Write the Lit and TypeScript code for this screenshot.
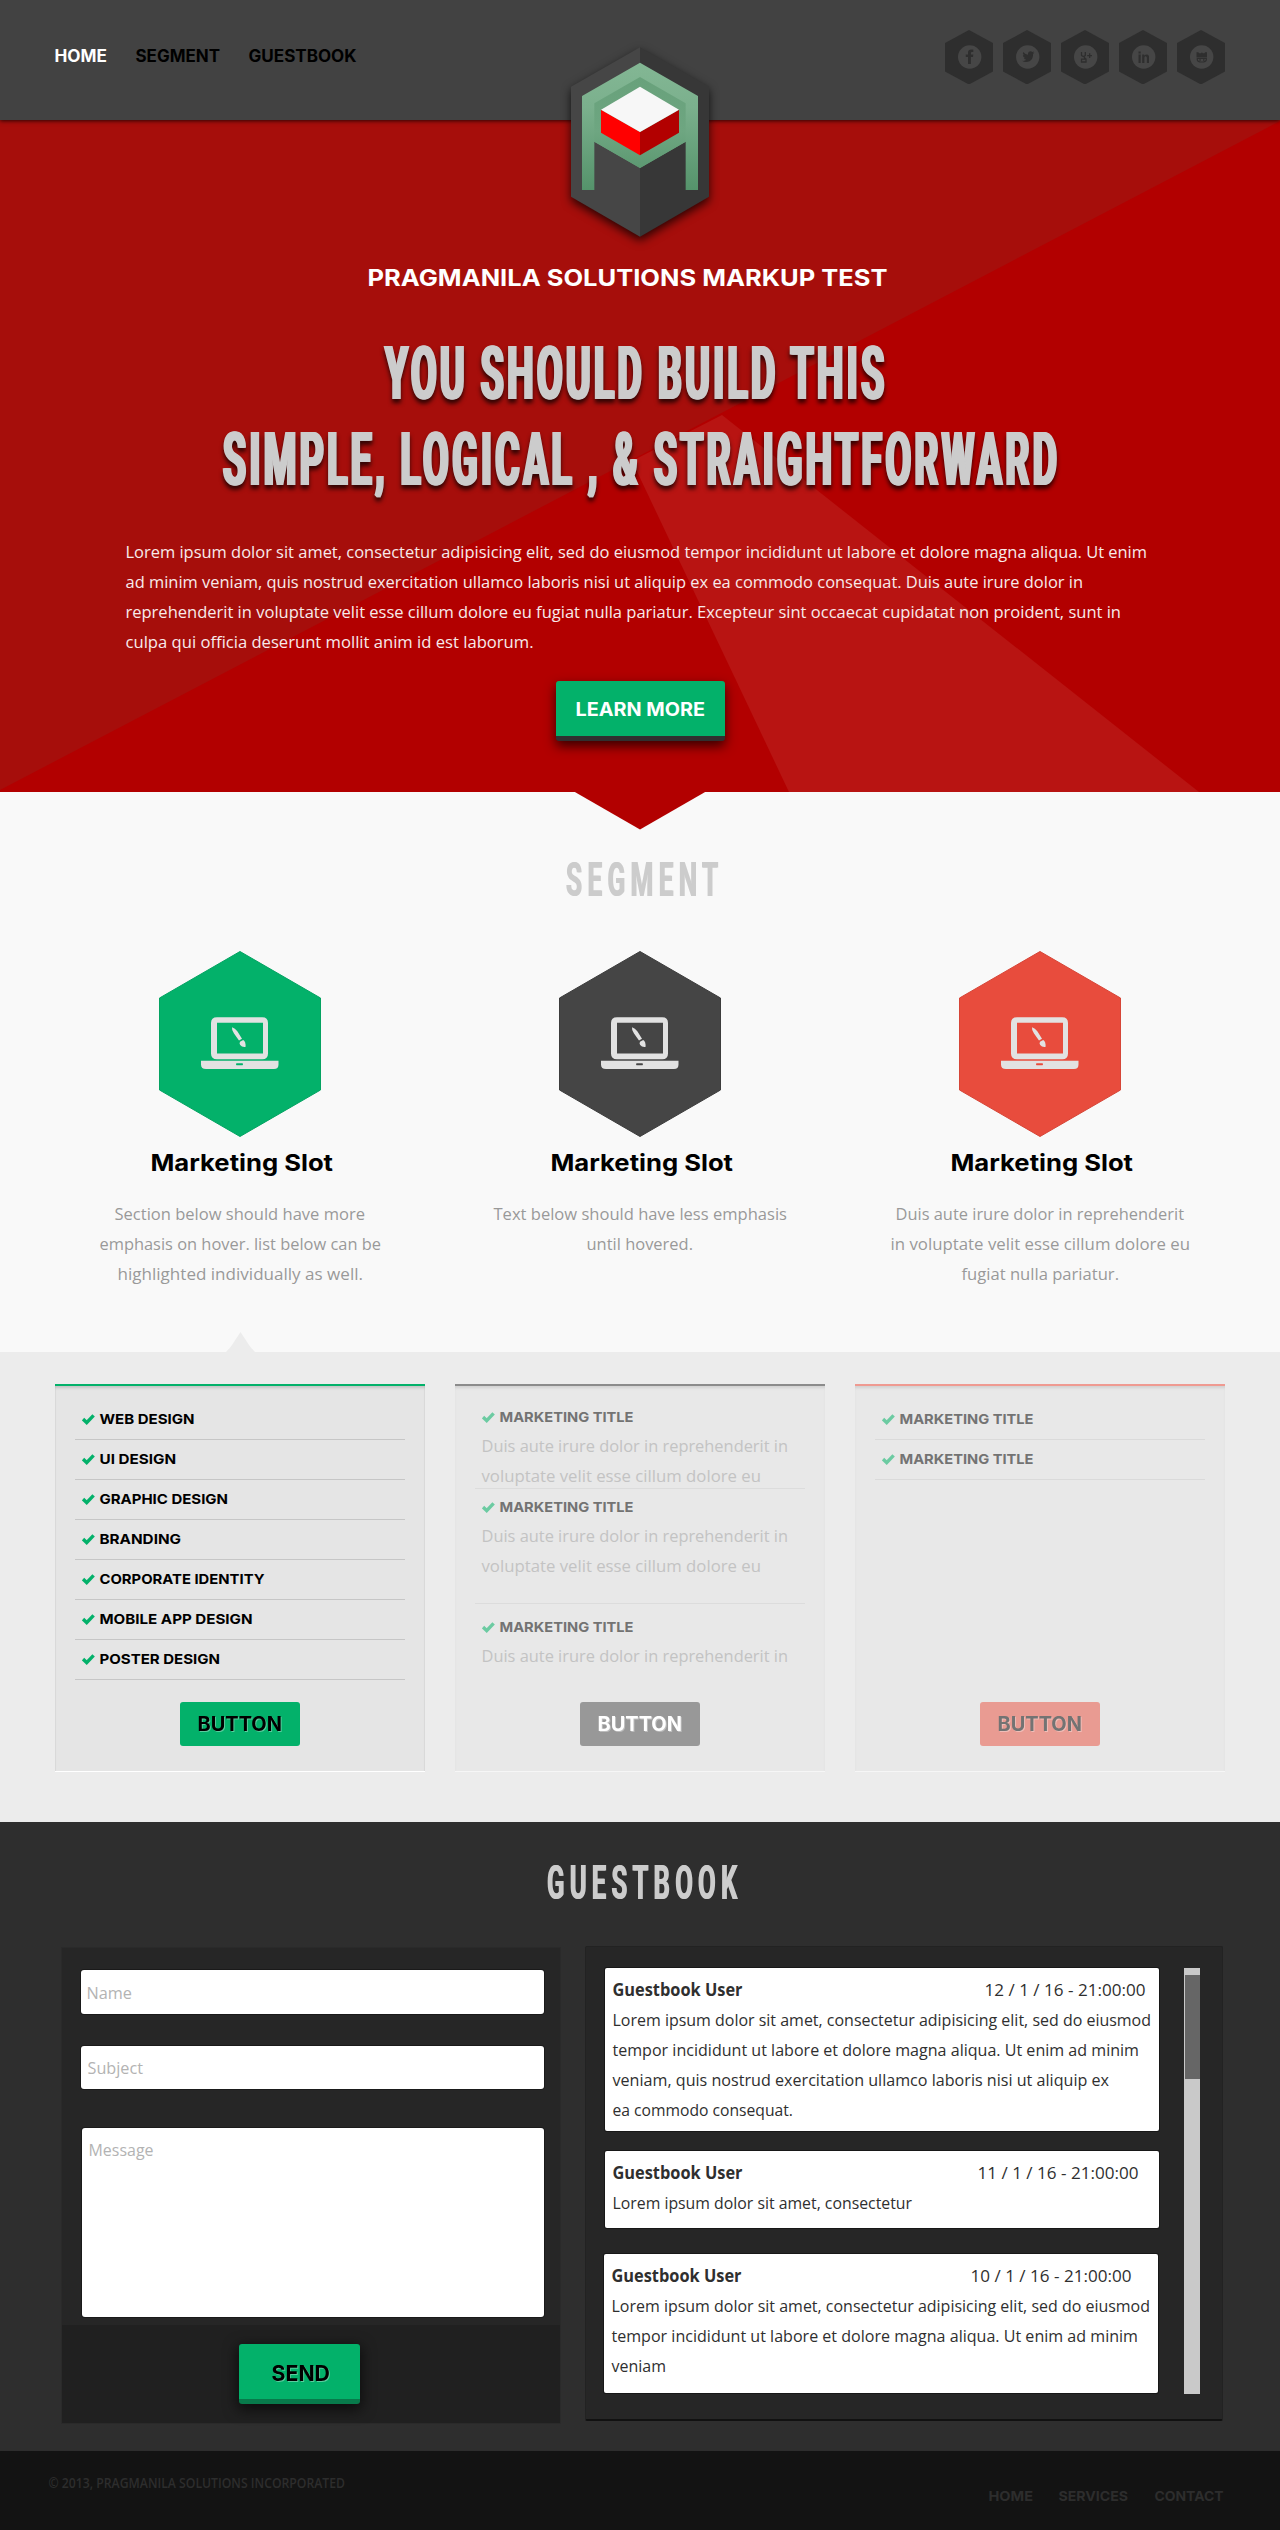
import { LitElement, html, css, svg, nothing } from "lit";
import { customElement } from "lit/decorators.js";

/** One line of text set to an exact measure; `base` is the baseline inside the line box. */
const line = (text: string, width: number, height: number, base: number, cls: string, indent = 0) => html`
  <svg class="line ${cls}" width=${width} height=${height} style=${indent ? `margin-left:${indent}px` : nothing}>
    <text x="-0.5" y=${base} textLength=${width + 0.5} lengthAdjust="spacingAndGlyphs">${text}</text>
  </svg>`;

const check = html`<svg class="check" width="13" height="11" viewBox="0 0 13 11">
  <path d="M1 5.100L4.700 8.600L11.600 1.300" fill="none" stroke="currentColor" stroke-width="3.400"/>
</svg>`;

const laptop = svg`
  <g fill="#e2e2e2">
    <path fill-rule="evenodd" d="M58 66.300H103.300Q109 66.300 109 72V102.500Q109 108.300 103.300 108.300H58Q52 108.300 52 102.500V72Q52 66.300 58 66.300ZM58 71.700V102.600H104V71.700Z"/>
    <path fill-rule="evenodd" d="M42 109.700H119.500V113.500Q119.500 118 115 118H47Q42 118 42 113.500ZM77.500 112.200Q76.500 113.200 77.500 114.200H83.500Q84.500 113.200 83.500 112.200Z"/>
    <path d="M73 76.200Q72.500 79 75 82.500L80 89.600L83 87.800L78.500 80.500Q76 77 73 76.200ZM81 90.800L84.200 88.900Q87 90.500 86.500 96Q83 96.500 81.200 94Q80 92.500 81 90.800Z"/>
  </g>`;

const hexagon = (fill: string, edge: string) => html`
  <svg class="hex" width="162" height="186" viewBox="0 0 162 186">
    <path d="M81 .5L161.500 47V139L81 185.500L.5 139V47Z" fill=${fill} stroke=${edge} stroke-width="1"/>
    ${laptop}
  </svg>`;

const glyphs = [
  svg`<path d="M23 64V57H20.800V54.500H23V52.700Q23 49.500 26.200 49.500H28.300V52H27Q25.900 52 25.900 53.200V54.500H28.300L28 57H25.900V64Z" transform="translate(0 -30)"/>`,
  svg`<path d="M19 30.800Q22 31.200 23.300 29.800Q21.300 29.300 20.900 27.900H21.900Q19.800 26.800 19.900 24.900L21 25.200Q19.200 23.700 20.200 22Q22.500 24.700 25 24.700Q24.900 21.300 27.700 21.300Q28.700 21.300 29.400 22L31 21.500L30.200 22.900L31.200 22.700L30.100 24Q30.200 29.200 26.500 31.200Q22.500 33 19 30.800Z"/>`,
  svg`<path d="M20.500 22v3.500q2 1.800 3.800 0V22M23 27l1.500 2M20.500 29.200h4.500v2.800h-4.500z" fill="none" stroke="#2e2e2e" stroke-width="1.300"/><path d="M26.200 25h1.800v-1.800h1.300V25H31v1.300h-1.700V28H28v-1.700h-1.800z"/>`,
  svg`<path d="M19.500 24.500h2.200V33h-2.200zM19.500 21.500h2.200v2h-2.200zM23.200 24.500h2v1.100Q28.200 23.300 30 26V33h-2.100V28Q27.700 26 26.300 26.300Q25.400 26.500 25.400 28V33h-2.200z"/>`,
  svg`<path d="M19.500 22.200h1.800l.8 1h1.900l.9-1 .9 1h1.500l.9-1h1.800v5h-10.500z"/><path d="M20.300 28.300v1.500q.5 2.200 4.500 2.200t4.500-2.200v-1.500z" fill="none" stroke="#2e2e2e" stroke-width="1.200"/><path d="M22.300 29.200h1.500v1.500h-1.500zM26 29.200h1.500v1.500H26z"/>`,
];

const slots = [
  { fill: "#03b16a", edge: "#04a362", lines: [["Section below should have more", 250], ["emphasis on hover. list below can be", 281], ["highlighted individually as well.", 245]] },
  { fill: "#454545", edge: "#3c3c3c", lines: [["Text below should have less emphasis", 293], ["until hovered.", 106]] },
  { fill: "#e84c3d", edge: "#d64537", lines: [["Duis aute irure dolor in reprehenderit", 288], ["in voluptate velit esse cillum dolore eu", 299], ["fugiat nulla pariatur.", 157]] },
] as { fill: string; edge: string; lines: [string, number][] }[];

const services: [string, number][] = [
  ["WEB DESIGN", 94.5], ["UI DESIGN", 76], ["GRAPHIC DESIGN", 128], ["BRANDING", 81],
  ["CORPORATE IDENTITY", 164.5], ["MOBILE APP DESIGN", 152.5], ["POSTER DESIGN", 120],
];

const lorem: [string, number][] = [
  ["Lorem ipsum dolor sit amet, consectetur adipisicing elit, sed do eiusmod", 538],
  ["tempor incididunt ut labore et dolore magna aliqua. Ut enim ad minim", 526],
];

const entries = [
  { cls: "e1", date: "12 / 1 / 16 - 21:00:00", lines: [...lorem, ["veniam, quis nostrud exercitation ullamco laboris nisi ut aliquip ex", 496], ["ea commodo consequat.", 180]] },
  { cls: "e2", date: "11 / 1 / 16 - 21:00:00", lines: [["Lorem ipsum dolor sit amet, consectetur", 299]] },
  { cls: "e3", date: "10 / 1 / 16 - 21:00:00", lines: [...lorem, ["veniam", 54]] },
] as { cls: string; date: string; lines: [string, number][] }[];

@customElement("app-root")
export class AppRoot extends LitElement {
  static styles = css`
    :host { display: block; width: 1280px; font-family: "Open Sans", sans-serif; }
    * { box-sizing: border-box; }
    .line { display: block; overflow: visible; flex: none; fill: currentColor; }
    .mont { font-family: Inter, "Open Sans", sans-serif; font-weight: 700; }
    .body { font-family: "Open Sans", "Noto Sans", sans-serif; font-size: 17.200px; }
    .gothic { font-family: Roboto, "Liberation Sans", sans-serif; font-weight: 700; }
    .s14 { font-size: 13.800px; }
    .body.s14 { font-size: 14px; }
    .s17 { font-size: 17px; }
    .s19 { font-size: 18.500px; }
    .s20 { font-size: 19.500px; }
    .s24 { font-size: 23px; }
    .slots .s24 { font-weight: 650; }

    header { height: 120px; background: #424242; padding: 0 55px; display: flex; align-items: flex-start; justify-content: space-between; position: relative; z-index: 2; box-shadow: 0 1px 4px rgba(0,0,0,.75); }
    nav { display: flex; padding-top: 41px; gap: 29px; color: #000; }
    nav .active { color: #fff; }
    .social { display: flex; gap: 10px; padding-top: 30px; }
    .logo { position: absolute; left: 540px; top: 30px; overflow: visible; filter: drop-shadow(0 4px 5px rgba(0,0,0,.75)); }

    .hero { position: relative; z-index: 1; height: 672px; padding-top: 144px; background: #b20000; color: #fff; }
    .rays { position: absolute; left: 0; top: 0; overflow: visible; }
    .copy { position: relative; display: flex; flex-direction: column; }
    .headline { margin-top: 35px; color: #ccc; filter: drop-shadow(1.200px 0 0 #ccc) drop-shadow(-1.200px 0 0 #ccc) drop-shadow(0 4px 2px rgba(0,0,0,.7)); }
    .headline .line { font-size: 74.500px; letter-spacing: 7px; }
    .intro { margin: 37px 0 0 125.500px; color: #f8eaea; }
    .cta { margin: 23px 0 0 556px; width: 169px; height: 60px; background: #03b16a; border-bottom: 5px solid #303030; border-radius: 3px; box-shadow: 0 5px 12px rgba(0,0,0,.7); display: flex; justify-content: center; }

    .segment { height: 560px; padding: 64px 55px 0; background: #f9f9f9; position: relative; }
    .section-title { font-size: 49px; letter-spacing: 10px; color: #ccc; filter: drop-shadow(1px 0 0 #ccc); }
    .slots { display: grid; grid-template-columns: repeat(3, 370px); gap: 30px; margin-top: 45px; }
    .slot { display: flex; flex-direction: column; align-items: center; color: #999; }
    .slot-title { margin: 12px 0 21px 3px; color: #000; }
    .pointer { position: absolute; left: 226px; bottom: 0; }

    .lists { height: 470px; padding: 32px 55px 0; background: #ececec; display: grid; grid-template-columns: repeat(3, 370px); gap: 30px; align-items: start; }
    .card { height: 387px; border-top: 2px solid #8b8b8b; background: #e8e8e8; padding: 14px 20px 25px; display: flex; flex-direction: column; box-shadow: 0 1px 0 #f6f6f6, inset 0 3px 3px -1px rgba(0,0,0,.1); color: #737373; }
    .card.on { border-color: #03b16a; background: #e5e5e5; color: #000; box-shadow: 0 1px 0 #fff, inset 0 3px 3px -1px rgba(0,0,0,.15), inset 1px 0 0 #dedede, inset -1px 0 0 #dedede; }
    .card.red { border-color: #ef9a91; }
    .row { display: flex; height: 40px; border-bottom: 1px solid #dadada; padding-left: 7px; }
    .on .row { border-color: #c6c6c6; }
    .check { color: #6ccba2; margin: 13.500px 4.500px 0 0; flex: none; }
    .on .check { color: #03b16a; }
    .item { padding-left: 7px; color: #c3c3c3; }
    .item .head { display: flex; color: #737373; }
    .item .check { margin-top: 9.500px; }
    .first { height: 89px; margin-bottom: 3px; padding-top: 2px; border-bottom: 1px solid #dcdcdc; }
    .second { height: 112px; margin-bottom: 8px; border-bottom: 1px solid #dcdcdc; }
    .btn { width: 120px; height: 44px; margin: auto auto 0; border-radius: 3px; display: flex; justify-content: center; background: #989898; color: #fff; }
    .btn .line { margin-right: 1px; filter: drop-shadow(1px 1px 0 rgba(255,255,255,.35)); }
    .on .btn { background: #03b16a; color: #000; }
    .red .btn { background: #e99b92; color: #737373; }

    .guestbook { height: 629px; background: #2e2e2e; padding: 37px 57px 0 62px; display: flex; flex-direction: column; }
    .panels { display: flex; gap: 25px; align-items: flex-start; margin-top: 37px; }
    .form { width: 498px; height: 475px; margin-top: 2px; background: #202020; box-shadow: 0 0 0 1px #2a2a2a; }
    .fields { height: 377px; background: #262626; padding: 22px 16px 0 19px; color: #b3b3b3; }
    .field { height: 44px; background: #fff; border-radius: 3px; box-shadow: 0 0 0 1px #1a1a1a; padding-left: 5.500px; margin-bottom: 32px; }
    .field.sub { height: 43px; margin-bottom: 39px; padding-left: 7px; }
    .field.msg { height: 189px; margin: 0 0 0 1px; padding-left: 7px; }
    .send { margin: 19px 0 0 177px; width: 121px; height: 60px; border-radius: 3px; background: #03b16a; border-bottom: 5px solid #087a4b; box-shadow: 0 4px 14px 2px rgba(0,0,0,.6); display: flex; justify-content: center; color: #000; }
    .send .line { font-size: 22px; margin-right: -2px; filter: drop-shadow(1px 1px 0 rgba(255,255,255,.35)); }
    .feed { width: 638px; height: 475px; background: #262626; border-radius: 2px; border: 1px solid #222; border-bottom: 2px solid #111; padding: 21px 22px 0 18.500px; display: flex; justify-content: space-between; }
    .entry { width: 554.500px; background: #fff; color: #2f2f2f; border-radius: 2px; box-shadow: 0 0 0 1px #171717; padding: 7.500px 0 0 8px; }
    .e1 { height: 163px; margin-bottom: 20px; }
    .e2 { height: 77px; margin-bottom: 26px; }
    .e3 { height: 139px; margin-left: -1px; }
    .meta { display: flex; justify-content: space-between; padding-right: 14px; }
    .e2 .meta { padding-right: 21px; }
    .e3 .meta { padding-right: 27px; }
    .who { font-weight: 700; }
    .track { width: 16px; height: 426px; background: #c9c9c9; padding: 7px 0 0 1px; }
    .thumb { height: 104px; background: #666; }

    footer { height: 79px; background: #131313; padding: 0 57px 0 48.500px; display: flex; justify-content: space-between; color: #2d2d2d; }
    .copyright { margin-top: 17px; font-weight: 600; }
    .links { display: flex; gap: 26.500px; margin-top: 30px; }
  `;

  private button() {
    return html`<div class="btn">${line("BUTTON", 84, 44, 29, "mont s20")}</div>`;
  }

  private item(cls: string, lines: number) {
    const text: [string, number][] = [["Duis aute irure dolor in reprehenderit in", 306], ["voluptate velit esse cillum dolore eu", 279]];
    return html`<div class="item ${cls}">
      <div class="head">${check}${line("MARKETING TITLE", 133.5, 30, 20, "mont s14")}</div>
      ${text.slice(0, lines).map(([t, w]) => line(t, w, 30, 19.5, "body"))}
    </div>`;
  }

  render() {
    return html`
      <header>
        <nav>
          ${line("HOME", 52, 30, 21, "mont s17 active")}
          ${line("SEGMENT", 84, 30, 21, "mont s17")}
          ${line("GUESTBOOK", 107.5, 30, 21, "mont s17")}
        </nav>
        <div class="social">
          ${glyphs.map((g) => html`<svg width="48" height="54" viewBox="0 0 48 54">
            <path d="M24 0L48 13V41.500L24 54.500L0 41.500V13Z" fill="#2e2e2e"/>
            <circle cx="24.700" cy="27" r="11.700" fill="#464646"/><g fill="#2e2e2e">${g}</g></svg>`)}
        </div>
        <svg class="logo" width="200" height="220" viewBox="0 0 600 660">
          <defs>
            <linearGradient id="frame" x1="0" y1="0" x2="0" y2="1"><stop offset="0" stop-color="#83b794"/><stop offset=".35" stop-color="#7bb08d"/><stop offset="1" stop-color="#55936b"/></linearGradient>
            <linearGradient id="inner" x1="0" y1="0" x2="0" y2="1"><stop offset="0" stop-color="#68a17b"/><stop offset=".6" stop-color="#6ea681"/><stop offset="1" stop-color="#5d9972"/></linearGradient>
          </defs>
          <path d="M300 52V620L93 500V170Z" fill="#464646"/>
          <path d="M300 52L507 170V500L300 620Z" fill="#373737"/>
          <path d="M300 98L474 198V480H437V335L300 414L163 335V480H126V198Z" fill="url(#frame)"/>
          <path d="M300 141L437 220V335L300 414L163 335V220Z" fill="url(#inner)"/>
          <path d="M183 239L300 306V376L183 308Z" fill="#f00"/>
          <path d="M417 239L300 306V376L417 308Z" fill="#b20000"/>
          <path d="M300 170L417 239L300 306L183 239Z" fill="#f7f7f7"/>
        </svg>
      </header>

      <section class="hero">
        <svg class="rays" width="1280" height="672" viewBox="0 120 1280 672">
          <path d="M0 120H1280V121L0 790Z" fill="#a60e0b"/>
          <path d="M722 415L1199 792H789L632 461Z" fill="#b81412"/>
        </svg>
        <svg class="rays" width="1280" height="672"><path d="M574 671.500H706L640 709.500Z" fill="#b20000"/></svg>
        <div class="copy">
          ${line("PRAGMANILA SOLUTIONS MARKUP TEST", 519.5, 30, 22, "mont s24", 368)}
          <div class="headline">
            ${line("YOU SHOULD BUILD THIS", 502, 86, 70, "gothic", 386)}
            ${line("SIMPLE, LOGICAL , & STRAIGHTFORWARD", 837, 86, 70, "gothic", 224)}
          </div>
          <div class="intro">
            ${line("Lorem ipsum dolor sit amet, consectetur adipisicing elit, sed do eiusmod tempor incididunt ut labore et dolore magna aliqua. Ut enim", 1021, 30, 20, "body")}
            ${line("ad minim veniam, quis nostrud exercitation ullamco laboris nisi ut aliquip ex ea commodo consequat. Duis aute irure dolor in", 957, 30, 20, "body")}
            ${line("reprehenderit in voluptate velit esse cillum dolore eu fugiat nulla pariatur. Excepteur sint occaecat cupidatat non proident, sunt in", 995, 30, 20, "body")}
            ${line("culpa qui officia deserunt mollit anim id est laborum.", 407.5, 30, 20, "body")}
          </div>
          <div class="cta">${line("LEARN MORE", 129, 55, 35, "mont s19")}</div>
        </div>
      </section>

      <section class="segment">
        ${line("SEGMENT", 157, 50, 40, "gothic section-title", 511)}
        <div class="slots">
          ${slots.map((s) => html`<div class="slot">
            ${hexagon(s.fill, s.edge)}
            <div class="slot-title">${line("Marketing Slot", 182, 30, 22, "mont s24")}</div>
            ${s.lines.map(([t, w]) => line(t, w, 30, 20, "body"))}
          </div>`)}
        </div>
        <svg class="pointer" width="29" height="20"><path d="M0 20Q4 16 6 13L14.500 0L23 13Q25 16 29 20Z" fill="#ececec"/></svg>
      </section>

      <section class="lists">
        <div class="card on">
          ${services.map(([t, w]) => html`<div class="row">${check}${line(t, w, 39, 24, "mont s14")}</div>`)}
          ${this.button()}
        </div>
        <div class="card">
          ${this.item("first", 2)}${this.item("second", 2)}${this.item("", 1)}
          ${this.button()}
        </div>
        <div class="card red">
          ${[0, 1].map(() => html`<div class="row">${check}${line("MARKETING TITLE", 133.5, 39, 24, "mont s14")}</div>`)}
          ${this.button()}
        </div>
      </section>

      <section class="guestbook">
        ${line("GUESTBOOK", 195, 50, 40, "gothic section-title", 484.5)}
        <div class="panels">
          <div class="form">
            <div class="fields">
              <div class="field">${line("Name", 45, 43, 29, "body")}</div>
              <div class="field sub">${line("Subject", 55, 43, 28, "body")}</div>
              <div class="field msg">${line("Message", 64.5, 43, 28, "body")}</div>
            </div>
            <div class="send">${line("SEND", 58, 55, 36.5, "mont")}</div>
          </div>
          <div class="feed">
            <div>
              ${entries.map((e) => html`<div class="entry ${e.cls}">
                <div class="meta">
                  ${line("Guestbook User", 129.5, 30, 20, "body who")}
                  ${line(e.date, 160.5, 30, 20, "body")}
                </div>
                ${e.lines.map(([t, w]) => line(t, w, 30, 19.5, "body"))}
              </div>`)}
            </div>
            <div class="track"><div class="thumb"></div></div>
          </div>
        </div>
      </section>

      <footer>
        <div class="copyright">${line("© 2013, PRAGMANILA SOLUTIONS INCORPORATED", 296, 30, 20, "body s14")}</div>
        <div class="links">
          ${line("HOME", 44, 30, 20, "mont s14")}
          ${line("SERVICES", 69, 30, 20, "mont s14")}
          ${line("CONTACT", 68.5, 30, 20, "mont s14")}
        </div>
      </footer>
    `;
  }
}
